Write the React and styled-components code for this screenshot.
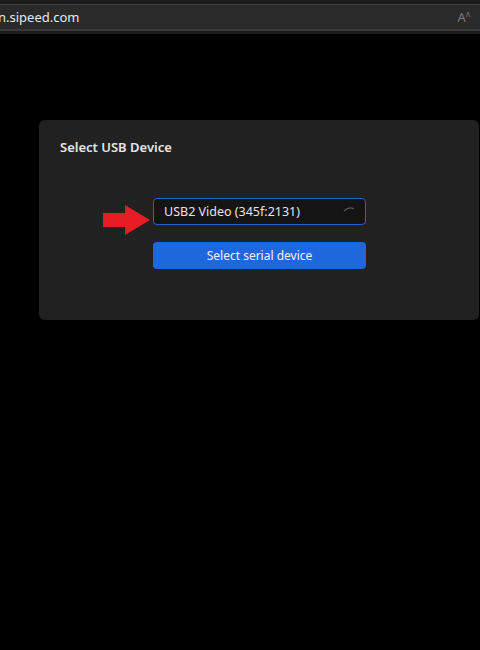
import React from "react";
import styled, { createGlobalStyle } from "styled-components";

const GlobalStyle = createGlobalStyle`
  html, body {
    margin: 0;
    padding: 0;
    background: #000000;
    font-family: "Segoe UI", "Noto Sans", "Open Sans", sans-serif;
  }
`;

const App = () => {
  return (
    <>
      <GlobalStyle />
      <Page>
        <BrowserBar>
          <AddressField>
            <Url>n.sipeed.com</Url>
            <ReadAloud>
              A<sup>ʌ</sup>
            </ReadAloud>
          </AddressField>
        </BrowserBar>
        <Content>
          <Card>
            <Title>Select USB Device</Title>
            <Body>
              <PickerRow>
                <Arrow viewBox="0 0 48 31" aria-hidden="true">
                  <path d="M0 8 H22 V0 L47 15 L22 30 V22 H0 Z" fill="#e81c24" />
                </Arrow>
                <Select>
                  <span>USB2 Video (345f:2131)</span>
                  <Spinner viewBox="0 0 12 6" aria-hidden="true">
                    <path d="M1 5 Q6 0 11 3" stroke="#555" strokeWidth="1.3" fill="none" />
                  </Spinner>
                </Select>
              </PickerRow>
              <Button>Select serial device</Button>
            </Body>
          </Card>
        </Content>
      </Page>
    </>
  );
};

const Page = styled.div`
  width: 480px;
  height: 650px;
  background: #000000;
  overflow: hidden;
  display: flex;
  flex-direction: column;
`;

const BrowserBar = styled.div`
  height: 34px;
  background: #1c1c1c;
  padding: 4px 0 3px;
  box-sizing: border-box;
`;

const AddressField = styled.div`
  height: 100%;
  margin: 0 -4px;
  background: #2a2a2a;
  border-top: 1px solid #404040;
  border-bottom: 2px solid #3a3a3a;
  box-sizing: border-box;
  display: flex;
  align-items: center;
  justify-content: space-between;
  padding: 0 14px 0 2px;
`;

const Url = styled.span`
  color: #e8e8e8;
  font-size: 13px;
`;

const ReadAloud = styled.span`
  color: #7a7a7a;
  font-size: 13px;
  sup {
    font-size: 8px;
  }
`;

const Content = styled.div`
  padding: 86px 1px 0 39px;
`;

const Card = styled.div`
  height: 200px;
  background: #212121;
  border-radius: 6px;
  box-sizing: border-box;
  padding: 18px 0 0 21px;
`;

const Title = styled.div`
  color: #e6e6e6;
  font-size: 13px;
  font-weight: 600;
`;

const Body = styled.div`
  display: flex;
  flex-direction: column;
  align-items: flex-start;
  gap: 17px;
  margin-top: 42px;
  padding-left: 93px;
`;

const PickerRow = styled.div`
  display: flex;
  align-items: flex-start;
  margin-left: -50px;
  gap: 2px;
`;

const Arrow = styled.svg`
  width: 48px;
  height: 31px;
  margin: 7px 0 -11px;
`;

const Select = styled.div`
  width: 213px;
  height: 27px;
  box-sizing: border-box;
  background: #141414;
  border: 1.5px solid #2462c4;
  border-radius: 4px;
  display: flex;
  align-items: center;
  justify-content: space-between;
  padding: 0 10px;
  color: #e4e4e4;
  font-size: 12.5px;
`;

const Spinner = styled.svg`
  width: 12px;
  height: 6px;
  margin-bottom: 6px;
`;

const Button = styled.div`
  width: 213px;
  height: 27px;
  background: #1e68dc;
  border-radius: 4px;
  color: #f4f4f4;
  font-size: 12px;
  display: flex;
  align-items: center;
  justify-content: center;
`;

export default App;
